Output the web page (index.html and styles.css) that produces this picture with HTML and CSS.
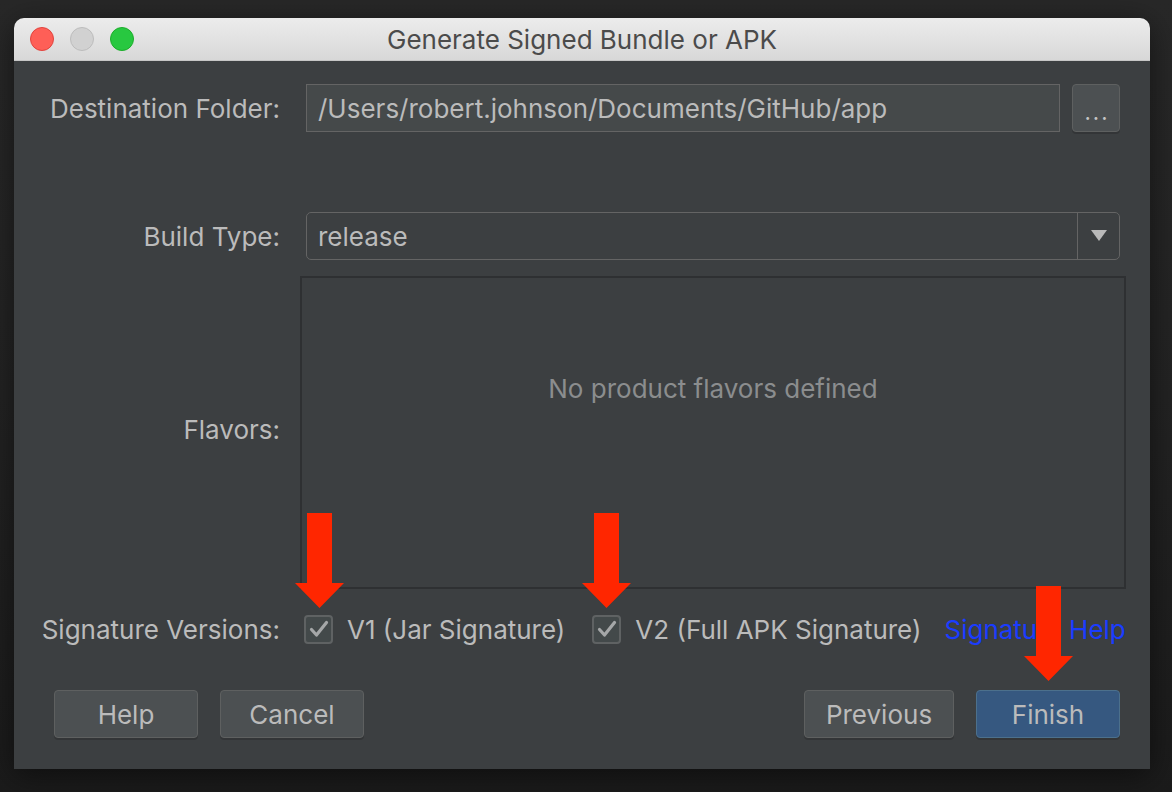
FILE: index.html
```html
<!DOCTYPE html>
<html>
<head>
<meta charset="utf-8">
<link rel="stylesheet" href="styles.css">
</head>
<body>
<div class="window">
  <div class="titlebar">
    <div class="lights">
      <span class="light red"></span>
      <span class="light gray"></span>
      <span class="light green"></span>
    </div>
    <div class="title">Generate Signed Bundle or APK</div>
  </div>
  <div class="content">
    <div class="row dest-row">
      <div class="label">Destination Folder:</div>
      <div class="field">/Users/robert.johnson/Documents/GitHub/app</div>
      <div class="browse">...</div>
    </div>
    <div class="row build-row">
      <div class="label">Build Type:</div>
      <div class="combo">
        <span class="combo-text">release</span>
        <span class="combo-arrow"><svg width="18" height="12" viewBox="0 0 18 12"><path d="M1 0 L17 0 L9 11 Z" fill="#b9b9b9"/></svg></span>
      </div>
    </div>
    <div class="row flavors-row">
      <div class="label">Flavors:</div>
      <div class="flavor-panel">No product flavors defined</div>
    </div>
    <div class="row sig-row">
      <div class="label">Signature Versions:</div>
      <div class="checks">
        <div class="check"><span class="box"><svg width="20" height="18" viewBox="0 0 20 18"><path d="M2.5 9.5 L7.5 15 L17.5 2.5" fill="none" stroke="#a5a7a8" stroke-width="3.2" stroke-linecap="round" stroke-linejoin="round"/></svg></span><span>V1 (Jar Signature)</span></div>
        <div class="check"><span class="box"><svg width="20" height="18" viewBox="0 0 20 18"><path d="M2.5 9.5 L7.5 15 L17.5 2.5" fill="none" stroke="#a5a7a8" stroke-width="3.2" stroke-linecap="round" stroke-linejoin="round"/></svg></span><span>V2 (Full APK Signature)</span></div>
        <a class="link">Signature Help</a>
      </div>
    </div>
    <div class="buttons">
      <div class="btn">Help</div>
      <div class="btn">Cancel</div>
      <div class="spacer"></div>
      <div class="btn wide">Previous</div>
      <div class="btn primary">Finish</div>
    </div>
  </div>
</div>
<svg class="arrow arrow1" width="49" height="95" viewBox="0 0 49 95"><path d="M12 0 H37 V70 H49 L24.5 95 L0 70 H12 Z" fill="#ff2600"/></svg>
<svg class="arrow arrow2" width="49" height="95" viewBox="0 0 49 95"><path d="M12 0 H37 V70 H49 L24.5 95 L0 70 H12 Z" fill="#ff2600"/></svg>
<svg class="arrow arrow3" width="49" height="95" viewBox="0 0 49 95"><path d="M12 0 H37 V70 H49 L24.5 95 L0 70 H12 Z" fill="#ff2600"/></svg>
</body>
</html>
```
FILE: styles.css
```css
html, body {
  margin: 0;
  padding: 0;
}
body {
  width: 1172px;
  height: 792px;
  overflow: hidden;
  position: relative;
  background: linear-gradient(180deg, #282828 0%, #232323 50%, #1b1b1b 100%);
  font-family: Inter, "Open Sans", "Liberation Sans", sans-serif;
  color: #bbbbbb;
}
.window {
  position: absolute;
  left: 14px;
  top: 18px;
  width: 1136px;
  height: 751px;
  display: flex;
  flex-direction: column;
  border-radius: 10px 10px 0 0;
  overflow: hidden;
  box-shadow: 0 6px 30px rgba(0,0,0,0.5);
}
.titlebar {
  height: 42px;
  flex: none;
  background: linear-gradient(180deg, #ececec 0%, #d8d8d8 100%);
  border-bottom: 1px solid #c6c6c6;
  display: flex;
  align-items: center;
  position: relative;
}
.lights {
  display: flex;
  gap: 16px;
  padding-left: 16px;
}
.light {
  width: 24px;
  height: 24px;
  border-radius: 50%;
  box-sizing: border-box;
}
.red { background: #fe5f57; border: 1px solid #e0443e; }
.gray { background: #d1d1d1; border: 1px solid #bcbcbc; }
.green { background: #28c840; border: 1px solid #1dad2b; }
.title {
  position: absolute;
  left: 0;
  right: 0;
  text-align: center;
  font-size: 26px;
  color: #4b4b4b;
}
.content {
  flex: 1;
  background: #3c3f41;
  padding: 23px 30px 0 24px;
  display: flex;
  flex-direction: column;
  white-space: nowrap;
}
.row {
  display: flex;
  align-items: center;
}
.label {
  width: 242px;
  margin-right: 26px;
  text-align: right;
  font-size: 26px;
  flex: none;
  color: #bbbbbb;
}
.dest-row {
  height: 48px;
}
.field {
  flex: 1;
  height: 48px;
  box-sizing: border-box;
  background: #45494a;
  border: 1px solid #646464;
  display: flex;
  align-items: center;
  padding-left: 11px;
  font-size: 26px;
  color: #bbbbbb;
}
.browse {
  width: 48px;
  height: 48px;
  box-sizing: border-box;
  margin-left: 12px;
  background: #4c5052;
  border: 1px solid #5e6060;
  border-radius: 4px;
  box-shadow: 0 2px 0 rgba(0,0,0,0.15);
  display: flex;
  align-items: flex-end;
  justify-content: center;
  font-size: 22px;
  line-height: 38px;
  color: #c4c4c4;
  letter-spacing: 2px;
  padding-left: 2px;
}
.build-row {
  margin-top: 80px;
  height: 48px;
}
.combo {
  flex: 1;
  height: 48px;
  box-sizing: border-box;
  border: 1px solid #646464;
  border-radius: 5px;
  display: flex;
  align-items: center;
  background: #3c3f41;
}
.combo-text {
  flex: 1;
  padding-left: 11px;
  font-size: 26px;
}
.combo-arrow {
  width: 41px;
  height: 100%;
  border-left: 1px solid #646464;
  display: flex;
  align-items: center;
  justify-content: center;
}
.flavors-row {
  margin-top: 16px;
  height: 313px;
}
.flavors-row .label {
  margin-right: 20px;
  position: relative;
  top: -3px;
}
.flavor-panel {
  flex: 1;
  margin-right: -6px;
  height: 313px;
  box-sizing: border-box;
  border: 2px solid #2e3032;
  display: flex;
  align-items: center;
  justify-content: center;
  padding-bottom: 88px;
  font-size: 26px;
  color: #8b8d8e;
}
.sig-row {
  margin-top: 25px;
  height: 30px;
}
.sig-row .label {
  margin-right: 24px;
}
.checks {
  display: flex;
  align-items: center;
  font-size: 26px;
  flex: none;
}
.check {
  display: flex;
  align-items: center;
  gap: 14px;
  margin-right: 27px;
  flex: none;
}
.check + .check {
  margin-right: 23px;
}
.box {
  width: 29px;
  height: 29px;
  flex: none;
  box-sizing: border-box;
  border: 2px solid #5f6263;
  border-radius: 4px;
  background: #43494a;
  display: flex;
  align-items: center;
  justify-content: center;
}
.link {
  color: #1a3cff;
  font-size: 26px;
  flex: none;
}
.buttons {
  margin-top: 46px;
  padding-left: 16px;
  display: flex;
  gap: 22px;
}
.spacer {
  flex: 1;
}
.btn {
  width: 144px;
  height: 48px;
  box-sizing: border-box;
  background: #4c5052;
  border: 1px solid #5e6060;
  border-radius: 4px;
  box-shadow: 0 2px 0 rgba(0,0,0,0.15);
  display: flex;
  align-items: center;
  justify-content: center;
  font-size: 26px;
  color: #bbbbbb;
}
.btn.wide {
  width: 150px;
}
.btn.primary {
  background: #365880;
  border-color: #4c708c;
}
.arrow {
  position: absolute;
}
.arrow1 { left: 295px; top: 513px; }
.arrow2 { left: 582px; top: 513px; }
.arrow3 { left: 1024px; top: 586px; }
```
